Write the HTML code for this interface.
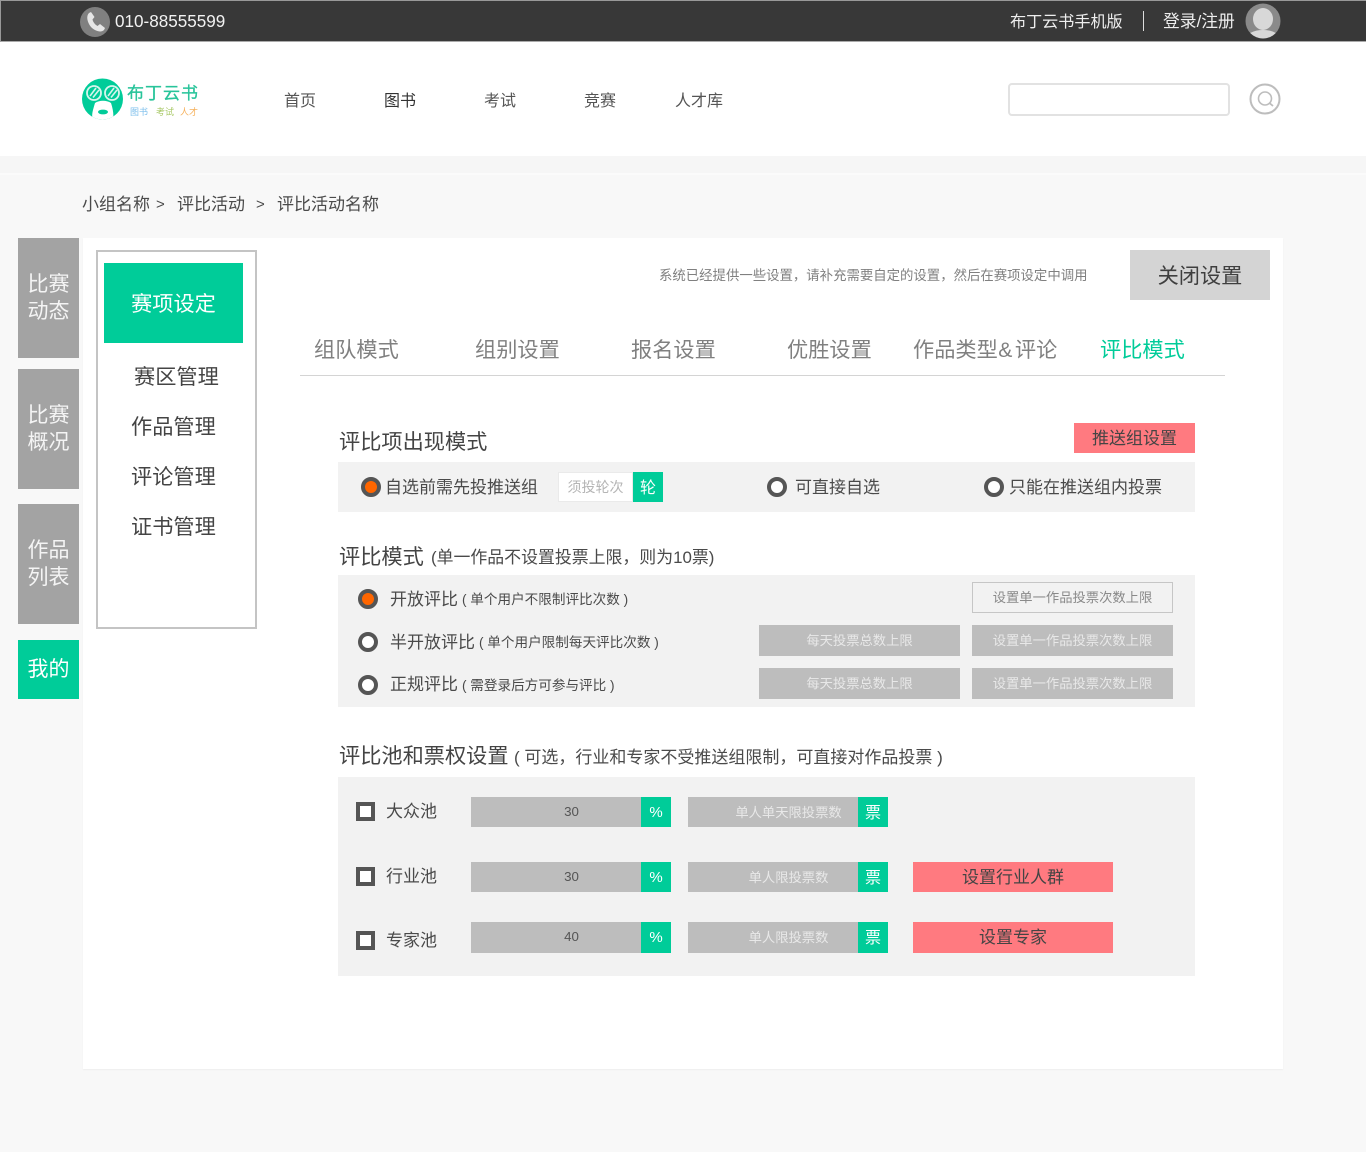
<!DOCTYPE html>
<html lang="zh"><head><meta charset="utf-8"><title>评比模式</title>
<style>
html,body{margin:0;padding:0}
body{width:1366px;height:1152px;position:relative;overflow:hidden;background:#f8f8f8;font-family:"Liberation Sans","Noto Sans CJK SC",sans-serif;color:#4a4a4a}
.b{position:absolute;box-sizing:border-box}
.t{position:absolute;white-space:nowrap;line-height:1}
.c{display:flex;align-items:center;justify-content:center;white-space:nowrap;position:absolute;box-sizing:border-box}
.g{background:#a3a3a3;color:#f4f4f4;font-size:21px;line-height:27px;text-align:center;left:18px;width:61px}
.r{position:absolute;width:20px;height:20px;border-radius:50%;border:4px solid #555;box-sizing:border-box;background:#fff}
.r.on{background:#f60}
.s{background:#bdbdbd;color:#e8e8e8;font-size:13.3px;padding-bottom:2px}
.v{padding-left:30px}
.ck{position:absolute;left:356px;width:19px;height:19px;border:4px solid #555;box-sizing:border-box;background:#fff}
.gr{background:#00cc99;color:#fff;font-size:15px}
.z{font-size:16px;padding-bottom:3px}
.p{background:#ff7a80;color:#444;font-size:17px;padding-bottom:3px}
.h{font-size:21.2px;color:#444}
.tb{font-size:21.2px;color:#808080;top:340px}
.m{font-size:17px;color:#4a4a4a}
.n{font-size:13.6px;color:#4a4a4a}
.nv{top:94px;font-size:16px;color:#555}
.l{font-size:21.2px;color:#444}
</style></head><body>
<div class="b" style="left:0;top:0;width:1366px;height:42px;background:#383838;border-top:1px solid #999;border-left:1px solid #999;border-bottom:1px solid #aaa"></div>
<div class="b" style="left:80px;top:7px;width:30px;height:30px;border-radius:50%;background:#808080"></div>
<svg class="b" style="left:80px;top:7px" width="30" height="30" viewBox="0 0 30 30"><path d="M9 6 C6 9 7 15 11 20 C15 24 21 26 24 23 L25 21 L20 17 L17.5 19 C15 17.5 13 15 12.5 12.5 L14.5 10 L11 5 Z" fill="#e6e6e6"/></svg>
<div class="t" style="left:115px;top:13px;font-size:17.1px;color:#f2f2f2">010-88555599</div>
<div class="t" style="left:1010px;top:14px;font-size:16.1px;color:#eee">布丁云书手机版</div>
<div class="b" style="left:1143px;top:11px;width:1px;height:20px;background:#ddd"></div>
<div class="t" style="left:1163px;top:14px;font-size:16.8px;color:#eee">登录/注册</div>
<svg class="b" style="left:1245px;top:3px" width="36" height="36" viewBox="0 0 36 36"><defs><clipPath id="a"><circle cx="18" cy="18" r="17.5"/></clipPath></defs><circle cx="18" cy="18" r="17.5" fill="#8a8a8a"/><g clip-path="url(#a)" fill="#d8d8d8"><ellipse cx="18" cy="16" rx="10" ry="11"/><ellipse cx="18" cy="36" rx="17" ry="9"/></g></svg>

<div class="b" style="left:0;top:42px;width:1366px;height:114px;background:#fff"></div>
<svg class="b" style="left:80px;top:77px" width="46" height="45" viewBox="0 0 46 45"><defs><clipPath id="k"><circle cx="22.5" cy="22" r="20.5"/></clipPath></defs><circle cx="22.5" cy="22" r="20.5" fill="#00cc99"/><circle cx="14" cy="16" r="7" fill="none" stroke="#d6f5ec" stroke-width="1.8"/><circle cx="32" cy="16" r="7" fill="none" stroke="#d6f5ec" stroke-width="1.8"/><path d="M10 19 L16 11 M13 20.5 L19 13 M28 19 L34 11 M31 20.5 L37 13" stroke="#d6f5ec" stroke-width="1.6"/><g clip-path="url(#k)"><path d="M15 26 C13 33 11 38 13 44 L33 44 C34 38 33 32 31 26 C27 23 19 23 15 26 Z" fill="#fff"/></g><ellipse cx="23" cy="35" rx="5" ry="2.4" fill="#00cc99"/></svg>
<div class="t" style="left:127px;top:85px;font-size:17px;color:#28c49a;letter-spacing:1px;-webkit-text-stroke:.3px #28c49a">布丁云书</div>
<div class="t" style="left:130px;top:108px;font-size:9px;color:#7fc0ec">图书</div>
<div class="t" style="left:156px;top:108px;font-size:9px;color:#a9c968">考试</div>
<div class="t" style="left:180px;top:108px;font-size:9px;color:#f6b25e">人才</div>
<div class="t nv" style="left:284px">首页</div>
<div class="t nv" style="left:384px;color:#333">图书</div>
<div class="t nv" style="left:484px">考试</div>
<div class="t nv" style="left:584px">竞赛</div>
<div class="t nv" style="left:675px">人才库</div>
<div class="b" style="left:1008px;top:83px;width:222px;height:33px;background:#fff;border:2px solid #e2e2e2;border-radius:4px"></div>
<svg class="b" style="left:1249px;top:83px" width="32" height="32" viewBox="0 0 32 32" fill="none" stroke="#bdbdbd"><circle cx="16" cy="16" r="14.5" stroke-width="2"/><circle cx="16" cy="15.5" r="6.5" stroke-width="1.6"/><path d="M20.5 20 L24 23" stroke-width="1.8"/></svg>
<div class="b" style="left:0;top:156px;width:1366px;height:17px;background:#f6f6f6"></div>
<div class="b" style="left:0;top:173px;width:1366px;height:2px;background:#fbfbfb"></div>

<div class="t" style="left:82px;top:196px;font-size:17px;color:#4a4a4a">小组名称</div>
<div class="t" style="left:156px;top:197px;font-size:15px;color:#4a4a4a">&gt;</div>
<div class="t" style="left:177px;top:196px;font-size:17px;color:#4a4a4a">评比活动</div>
<div class="t" style="left:256px;top:197px;font-size:15px;color:#4a4a4a">&gt;</div>
<div class="t" style="left:277px;top:196px;font-size:17px;color:#4a4a4a">评比活动名称</div>

<div class="b" style="left:83px;top:238px;width:1200px;height:831px;background:#fff;box-shadow:0 1px 1px #eee"></div>

<div class="c g" style="top:238px;height:120px">比赛<br>动态</div>
<div class="c g" style="top:369px;height:120px">比赛<br>概况</div>
<div class="c g" style="top:504px;height:120px">作品<br>列表</div>
<div class="c g" style="top:640px;height:59px;background:#00cc99;color:#fff">我的</div>

<div class="b" style="left:96px;top:250px;width:161px;height:379px;background:#fff;border:2px solid #c4c4c4"></div>
<div class="c" style="left:104px;top:263px;width:139px;height:80px;background:#00cc99;color:#fff;font-size:21.2px;padding-bottom:1px">赛项设定</div>
<div class="t l" style="left:134px;top:367px">赛区管理</div>
<div class="t l" style="left:131px;top:417px">作品管理</div>
<div class="t l" style="left:131px;top:467px">评论管理</div>
<div class="t l" style="left:131px;top:517px">证书管理</div>

<div class="t" style="left:659px;top:269px;font-size:13.4px;color:#808080">系统已经提供一些设置，请补充需要自定的设置，然后在赛项设定中调用</div>
<div class="c" style="left:1130px;top:250px;width:140px;height:50px;background:#d4d4d4;color:#3f3f3f;font-size:21.2px;padding-bottom:1px">关闭设置</div>

<div class="t tb" style="left:314px">组队模式</div>
<div class="t tb" style="left:475px">组别设置</div>
<div class="t tb" style="left:631px">报名设置</div>
<div class="t tb" style="left:787px">优胜设置</div>
<div class="t tb" style="left:913px">作品类型<span style="letter-spacing:2.5px;margin-left:.5px">&amp;</span>评论</div>
<div class="t tb" style="left:1100px;color:#00cc99">评比模式</div>
<div class="b" style="left:300px;top:375px;width:925px;height:1px;background:#d4d4d4"></div>

<div class="t h" style="left:339px;top:432px">评比项出现模式</div>
<div class="c p" style="left:1074px;top:423px;width:121px;height:30px">推送组设置</div>
<div class="b" style="left:338px;top:462px;width:857px;height:50px;background:#f2f2f2"></div>
<div class="r on" style="left:361px;top:477px"></div>
<div class="t m" style="left:385px;top:479px">自选前需先投推送组</div>
<div class="c" style="left:558px;top:472px;width:75px;height:30px;background:#fff;border:1px solid #eaeaea;color:#b5b5b5;font-size:14px">须投轮次</div>
<div class="c gr z" style="left:633px;top:472px;width:30px;height:30px;padding-bottom:2px">轮</div>
<div class="r" style="left:767px;top:477px"></div>
<div class="t m" style="left:795px;top:479px">可直接自选</div>
<div class="r" style="left:984px;top:477px"></div>
<div class="t m" style="left:1009px;top:479px">只能在推送组内投票</div>

<div class="t h" style="left:339px;top:547px">评比模式</div>
<div class="t" style="left:431px;top:550px;font-size:16.9px;color:#4a4a4a">(单一作品不设置投票上限，则为10票)</div>
<div class="b" style="left:338px;top:575px;width:857px;height:132px;background:#f2f2f2"></div>
<div class="r on" style="left:358px;top:589px"></div>
<div class="t m" style="left:390px;top:591px">开放评比</div>
<div class="t n" style="left:462px;top:593px">( 单个用户不限制评比次数 )</div>
<div class="r" style="left:358px;top:632px"></div>
<div class="t m" style="left:390px;top:634px">半开放评比</div>
<div class="t n" style="left:479px;top:636px">( 单个用户限制每天评比次数 )</div>
<div class="r" style="left:358px;top:675px"></div>
<div class="t m" style="left:390px;top:676px">正规评比</div>
<div class="t n" style="left:462px;top:679px">( 需登录后方可参与评比 )</div>
<div class="c" style="left:972px;top:582px;width:201px;height:31px;border:1px solid #c6c6c6;color:#8a8a8a;font-size:13.3px;padding-bottom:2px">设置单一作品投票次数上限</div>
<div class="c s" style="left:759px;top:625px;width:201px;height:31px">每天投票总数上限</div>
<div class="c s" style="left:972px;top:625px;width:201px;height:31px">设置单一作品投票次数上限</div>
<div class="c s" style="left:759px;top:668px;width:201px;height:31px">每天投票总数上限</div>
<div class="c s" style="left:972px;top:668px;width:201px;height:31px">设置单一作品投票次数上限</div>

<div class="t h" style="left:339px;top:746px">评比池和票权设置</div>
<div class="t" style="left:514px;top:749px;font-size:17px;color:#4a4a4a">( 可选，行业和专家不受推送组限制，可直接对作品投票 )</div>
<div class="b" style="left:338px;top:777px;width:857px;height:199px;background:#f2f2f2"></div>

<div class="ck" style="top:802px"></div>
<div class="t m" style="left:386px;top:803px">大众池</div>
<div class="c s v" style="left:471px;top:797px;width:171px;height:30px;color:#555">30</div>
<div class="c gr" style="left:641px;top:797px;width:30px;height:30px">%</div>
<div class="c s v" style="left:688px;top:797px;width:171px;height:30px">单人单天限投票数</div>
<div class="c gr z" style="left:858px;top:797px;width:30px;height:30px">票</div>

<div class="ck" style="top:867px"></div>
<div class="t m" style="left:386px;top:868px">行业池</div>
<div class="c s v" style="left:471px;top:862px;width:171px;height:30px;color:#555">30</div>
<div class="c gr" style="left:641px;top:862px;width:30px;height:30px">%</div>
<div class="c s v" style="left:688px;top:862px;width:171px;height:30px">单人限投票数</div>
<div class="c gr z" style="left:858px;top:862px;width:30px;height:30px">票</div>
<div class="c p" style="left:913px;top:862px;width:200px;height:30px">设置行业人群</div>

<div class="ck" style="top:931px"></div>
<div class="t m" style="left:386px;top:932px">专家池</div>
<div class="c s v" style="left:471px;top:922px;width:171px;height:31px;color:#555">40</div>
<div class="c gr" style="left:641px;top:922px;width:30px;height:31px">%</div>
<div class="c s v" style="left:688px;top:922px;width:171px;height:31px">单人限投票数</div>
<div class="c gr z" style="left:858px;top:922px;width:30px;height:31px">票</div>
<div class="c p" style="left:913px;top:922px;width:200px;height:31px;padding-bottom:4px">设置专家</div>
</body></html>
